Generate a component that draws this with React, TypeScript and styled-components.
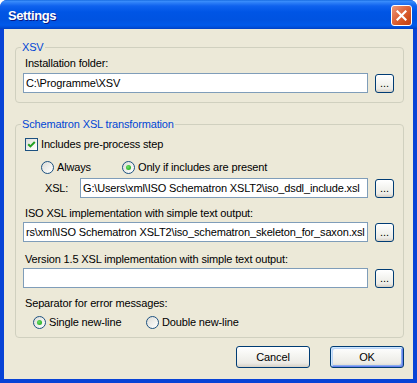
import React from "react";
import styled, { createGlobalStyle } from "styled-components";

const Global = createGlobalStyle`
  html, body { margin: 0; padding: 0; background: #ffffff; }
  body { font-family: "Liberation Sans", Arial, sans-serif; }
  * { box-sizing: border-box; }
`;

const Window = styled.div`
  width: 417px;
  height: 383px;
  display: flex;
  flex-direction: column;
  border-radius: 7px 7px 0 0;
  overflow: hidden;
  background: #0843d6;
`;

const TitleBar = styled.div`
  height: 29px;
  flex: none;
  display: flex;
  align-items: center;
  justify-content: space-between;
  padding: 1px 5px 0 8px;
  background: linear-gradient(
    180deg,
    #0a5fd8 0px,
    #3d90fc 1px,
    #2a7cf6 3px,
    #0f62ee 6px,
    #0055e5 12px,
    #0053e1 20px,
    #0059ea 25px,
    #0050dc 27px,
    #0040c4 29px
  );
`;

const Title = styled.span`
  color: #ffffff;
  font: bold 13px "Liberation Sans", Arial, sans-serif;
  letter-spacing: -0.4px;
  text-shadow: 1px 1px 0 #0a1883;
`;

const CloseButton = styled.div`
  width: 21px;
  height: 21px;
  border: 1px solid #ffffff;
  border-radius: 3px;
  background: linear-gradient(135deg, #ec9a7c 0%, #e06a42 40%, #d2511f 70%, #c23f15 100%);
  display: flex;
  align-items: center;
  justify-content: center;
`;

const Client = styled.div`
  flex: 1;
  margin: 0 4px 4px 4px;
  background: #ece9d8;
  padding: 12px 9px 0 11px;
  display: flex;
  flex-direction: column;
  font-size: 11px;
  letter-spacing: -0.15px;
  color: #000000;
`;

const Group = styled.fieldset<{ $mt?: number; $pb: number }>`
  margin: ${(p) => p.$mt ?? 0}px 0 0 0;
  border: 1px solid #d0d0bf;
  border-radius: 4px;
  padding: 0 9px ${(p) => p.$pb}px 7px;
  min-width: 0;
  display: flex;
  flex-direction: column;
`;

const Legend = styled.legend`
  padding: 0 1px;
  margin-left: -2px;
  color: #0046d5;
  line-height: 13px;
  font-size: 11px;
`;

const Label = styled.div<{ $mt: number; $pl?: number }>`
  line-height: 13px;
  height: 13px;
  margin-top: ${(p) => p.$mt}px;
  padding-left: ${(p) => p.$pl ?? 0}px;
  white-space: nowrap;
`;

const Row = styled.div<{ $mt: number; $pl?: number }>`
  display: flex;
  align-items: flex-start;
  margin-top: ${(p) => p.$mt}px;
  padding-left: ${(p) => p.$pl ?? 0}px;
`;

const FieldLabel = styled.span<{ $w: number }>`
  width: ${(p) => p.$w}px;
  height: 20px;
  line-height: 20px;
  flex: none;
`;

const TextBox = styled.div<{ $w: number }>`
  width: ${(p) => p.$w}px;
  height: 20px;
  flex: none;
  border: 1px solid #7f9db9;
  background: #ffffff;
  padding: 0 2px;
  line-height: 18px;
  white-space: nowrap;
  overflow: hidden;
`;

const BrowseButton = styled.div`
  width: 19px;
  height: 19px;
  margin: 1px 0 0 7px;
  flex: none;
  border: 1px solid #003c74;
  border-radius: 3px;
  background: linear-gradient(180deg, #ffffff 0%, #f4f4f0 45%, #ecebe6 80%, #d6d0c5 100%);
  display: flex;
  align-items: flex-end;
  justify-content: center;
  font-size: 11px;
  line-height: 13px;
  letter-spacing: 0;
  padding-bottom: 2px;
`;

const CheckRow = styled.label<{ $mt: number; $pl: number }>`
  display: flex;
  align-items: center;
  height: 13px;
  margin-top: ${(p) => p.$mt}px;
  padding-left: ${(p) => p.$pl}px;
  line-height: 13px;
`;

const CheckBox = styled.span`
  width: 13px;
  height: 13px;
  flex: none;
  border: 1px solid #1c5180;
  background: linear-gradient(135deg, #dcdcd7 0%, #f7f7f5 70%, #ffffff 100%);
  display: flex;
  align-items: center;
  justify-content: center;
  margin-right: 3px;
`;

const RadioGroup = styled.div<{ $mt: number; $pl: number }>`
  display: flex;
  align-items: center;
  height: 13px;
  margin-top: ${(p) => p.$mt}px;
  padding-left: ${(p) => p.$pl}px;
`;

const RadioOption = styled.label<{ $w?: number }>`
  display: flex;
  align-items: center;
  line-height: 13px;
  white-space: nowrap;
  ${(p) => (p.$w ? `width: ${p.$w}px; flex: none;` : "")}
`;

const RadioCircle = styled.span<{ $on?: boolean }>`
  width: 13px;
  height: 13px;
  flex: none;
  border: 1px solid #1c5180;
  border-radius: 50%;
  background: linear-gradient(135deg, #dcdcd7 0%, #f4f4f1 65%, #ffffff 100%);
  display: flex;
  align-items: center;
  justify-content: center;
  margin-right: 3px;
  &::after {
    content: "";
    display: ${(p) => (p.$on ? "block" : "none")};
    width: 5px;
    height: 5px;
    border-radius: 50%;
    background: radial-gradient(circle at 40% 40%, #6ee06a 0%, #3cbf3a 50%, #1d9a1d 100%);
  }
`;

const ButtonRow = styled.div`
  display: flex;
  justify-content: flex-end;
  gap: 20px;
  margin-top: 8px;
`;

const DialogButton = styled.div<{ $default?: boolean }>`
  width: 74px;
  height: 22px;
  border: 1px solid #003c74;
  border-radius: 3px;
  background: linear-gradient(180deg, #ffffff 0%, #f4f4f0 45%, #ecebe6 80%, #d6d0c5 100%);
  display: flex;
  align-items: center;
  justify-content: center;
  font-size: 11px;
  letter-spacing: -0.1px;
  box-shadow: ${(p) =>
    p.$default
      ? "inset 1px 1px 0 #cee7ff, inset -1px -1px 0 #6982ee, inset 2px 2px 0 #bcd4f6, inset -2px -2px 0 #89adf0"
      : "none"};
`;

const Check = () => (
  <svg width="9" height="9" viewBox="0 0 9 9">
    <path d="M1.2 4.2 L3.4 6.4 L7.8 2" fill="none" stroke="#21a121" strokeWidth="2" />
  </svg>
);

const CloseX = () => (
  <svg width="11" height="11" viewBox="0 0 11 11">
    <path d="M1.5 1.5 L9.5 9.5 M9.5 1.5 L1.5 9.5" stroke="#ffffff" strokeWidth="2.2" strokeLinecap="square" />
  </svg>
);

export default function App() {
  return (
    <>
      <Global />
      <Window>
        <TitleBar>
          <Title>Settings</Title>
          <CloseButton>
            <CloseX />
          </CloseButton>
        </TitleBar>
        <Client>
          <Group $pb={9}>
            <Legend>XSV</Legend>
            <Label $mt={3} $pl={2}>Installation folder:</Label>
            <Row $mt={3}>
              <TextBox $w={345}>C:\Programme\XSV</TextBox>
              <BrowseButton>...</BrowseButton>
            </Row>
          </Group>

          <Group $mt={15} $pb={8}>
            <Legend>Schematron XSL transformation</Legend>
            <CheckRow $mt={7} $pl={2}>
              <CheckBox>
                <Check />
              </CheckBox>
              Includes pre-process step
            </CheckRow>
            <RadioGroup $mt={10} $pl={18}>
              <RadioOption $w={81}>
                <RadioCircle />
                Always
              </RadioOption>
              <RadioOption>
                <RadioCircle $on />
                Only if includes are present
              </RadioOption>
            </RadioGroup>
            <Row $mt={4} $pl={22}>
              <FieldLabel $w={35}>XSL:</FieldLabel>
              <TextBox $w={288}>G:\Users\xml\ISO Schematron XSLT2\iso_dsdl_include.xsl</TextBox>
              <BrowseButton>...</BrowseButton>
            </Row>
            <Label $mt={9} $pl={2}>ISO XSL implementation with simple text output:</Label>
            <Row $mt={2}>
              <TextBox $w={345}>rs\xml\ISO Schematron XSLT2\iso_schematron_skeleton_for_saxon.xsl</TextBox>
              <BrowseButton>...</BrowseButton>
            </Row>
            <Label $mt={11} $pl={2}>Version 1.5 XSL implementation with simple text output:</Label>
            <Row $mt={2}>
              <TextBox $w={345} />
              <BrowseButton>...</BrowseButton>
            </Row>
            <Label $mt={9} $pl={2}>Separator for error messages:</Label>
            <RadioGroup $mt={6} $pl={10}>
              <RadioOption $w={113}>
                <RadioCircle $on />
                Single new-line
              </RadioOption>
              <RadioOption>
                <RadioCircle />
                Double new-line
              </RadioOption>
            </RadioGroup>
          </Group>

          <ButtonRow>
            <DialogButton>Cancel</DialogButton>
            <DialogButton $default>OK</DialogButton>
          </ButtonRow>
        </Client>
      </Window>
    </>
  );
}
